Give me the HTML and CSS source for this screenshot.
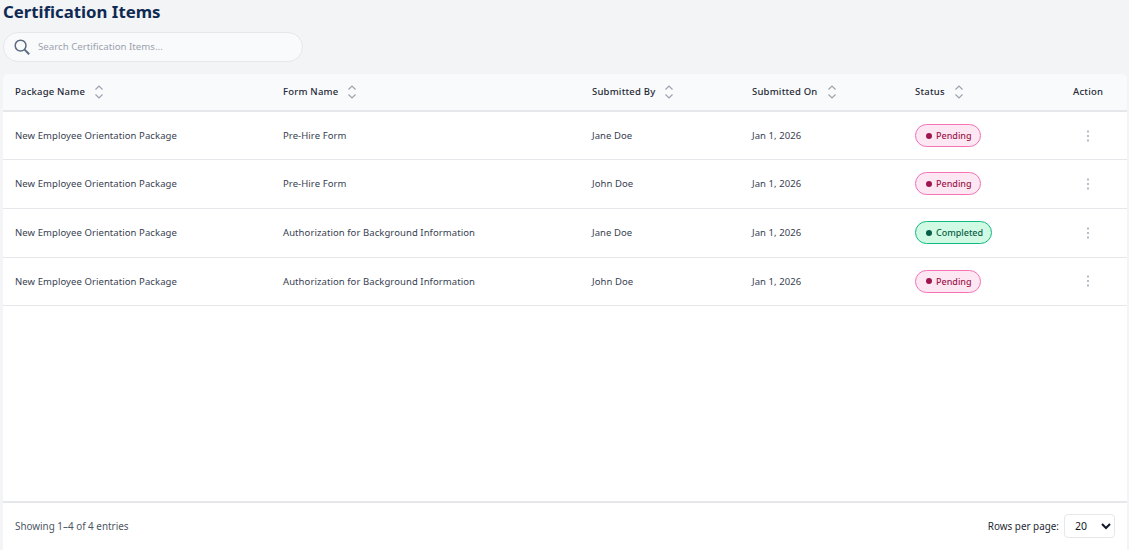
FILE: index.html
```html
<!DOCTYPE html>
<html lang="en">
<head>
<meta charset="utf-8">
<title>Certification Items</title>
<link rel="stylesheet" href="styles.css">
</head>
<body>
<main class="page">
  <h1 class="title">Certification Items</h1>
  <label class="search">
    <svg class="search-icon" viewBox="0 0 16 16" width="16" height="16" fill="none" stroke="#5a6b82" stroke-width="1.5"><circle cx="6.6" cy="6.6" r="5.4"/><path d="M10.6 10.6 15.2 15.2" stroke-width="2"/></svg>
    <input class="search-input" type="text" placeholder="Search Certification Items...">
  </label>
  <section class="panel">
    <div class="table-wrap">
      <table class="table">
        <colgroup>
          <col class="c1"><col class="c2"><col class="c3"><col class="c4"><col class="c5"><col class="c6">
        </colgroup>
        <thead>
          <tr>
            <th><span class="th-in">Package Name<svg class="sort" viewBox="0 0 10 16" width="10" height="16"><path d="M1.5 5.5 5 2l3.5 3.5M1.5 10.5 5 14l3.5-3.5"/></svg></span></th>
            <th><span class="th-in">Form Name<svg class="sort" viewBox="0 0 10 16" width="10" height="16"><path d="M1.5 5.5 5 2l3.5 3.5M1.5 10.5 5 14l3.5-3.5"/></svg></span></th>
            <th><span class="th-in">Submitted By<svg class="sort" viewBox="0 0 10 16" width="10" height="16"><path d="M1.5 5.5 5 2l3.5 3.5M1.5 10.5 5 14l3.5-3.5"/></svg></span></th>
            <th><span class="th-in">Submitted On<svg class="sort" viewBox="0 0 10 16" width="10" height="16"><path d="M1.5 5.5 5 2l3.5 3.5M1.5 10.5 5 14l3.5-3.5"/></svg></span></th>
            <th><span class="th-in">Status<svg class="sort" viewBox="0 0 10 16" width="10" height="16"><path d="M1.5 5.5 5 2l3.5 3.5M1.5 10.5 5 14l3.5-3.5"/></svg></span></th>
            <th>Action</th>
          </tr>
        </thead>
        <tbody>
          <tr>
            <td>New Employee Orientation Package</td><td>Pre-Hire Form</td><td>Jane Doe</td><td>Jan 1, 2026</td>
            <td><span class="badge pending"><i class="dot"></i>Pending</span></td>
            <td class="action"><svg class="kebab" viewBox="0 0 4 12" width="4" height="12"><circle cx="2" cy="1.5" r="0.9"/><circle cx="2" cy="6" r="0.9"/><circle cx="2" cy="10.5" r="0.9"/></svg></td>
          </tr>
          <tr class="row-tight">
            <td>New Employee Orientation Package</td><td>Pre-Hire Form</td><td>John Doe</td><td>Jan 1, 2026</td>
            <td><span class="badge pending"><i class="dot"></i>Pending</span></td>
            <td class="action"><svg class="kebab" viewBox="0 0 4 12" width="4" height="12"><circle cx="2" cy="1.5" r="0.9"/><circle cx="2" cy="6" r="0.9"/><circle cx="2" cy="10.5" r="0.9"/></svg></td>
          </tr>
          <tr>
            <td>New Employee Orientation Package</td><td>Authorization for Background Information</td><td>Jane Doe</td><td>Jan 1, 2026</td>
            <td><span class="badge completed"><i class="dot"></i>Completed</span></td>
            <td class="action"><svg class="kebab" viewBox="0 0 4 12" width="4" height="12"><circle cx="2" cy="1.5" r="0.9"/><circle cx="2" cy="6" r="0.9"/><circle cx="2" cy="10.5" r="0.9"/></svg></td>
          </tr>
          <tr>
            <td>New Employee Orientation Package</td><td>Authorization for Background Information</td><td>John Doe</td><td>Jan 1, 2026</td>
            <td><span class="badge pending"><i class="dot"></i>Pending</span></td>
            <td class="action"><svg class="kebab" viewBox="0 0 4 12" width="4" height="12"><circle cx="2" cy="1.5" r="0.9"/><circle cx="2" cy="6" r="0.9"/><circle cx="2" cy="10.5" r="0.9"/></svg></td>
          </tr>
        </tbody>
      </table>
    </div>
    <footer class="footer">
      <span class="entries">Showing 1–4 of 4 entries</span>
      <div class="rows">
        <span class="rows-label">Rows per page:</span>
        <select class="rows-select"><option>20</option></select>
      </div>
    </footer>
  </section>
</main>
</body>
</html>
```
FILE: styles.css
```css
* { box-sizing: border-box; }
html, body { margin: 0; height: 100%; overflow: hidden; }
body { background: #f3f4f6; font-family: "Noto Sans", "Open Sans", sans-serif; color: #1f2937; }
.page { height: 550px; padding: 0 2px 0 3px; display: flex; flex-direction: column; }
.title { margin: 0; font-size: 16.8px; line-height: 23px; font-weight: 700; color: #0f2a52; }
.search { margin-top: 9px; width: 300px; height: 30px; display: flex; align-items: center; gap: 7px; padding-left: 10px; background: #f9fafb; border: 1px solid #e5e7eb; border-radius: 15px; }
.search-icon { flex: none; }
.search-input { flex: 1; min-width: 0; height: 20px; padding: 0 0 2px 1px; border: 0; outline: 0; background: transparent; font: 400 9.7px "Noto Sans", sans-serif; color: #374151; }
.search-input::placeholder { color: #9ca3af; opacity: 1; }
.panel { margin-top: 12px; flex: 1; min-height: 0; display: flex; flex-direction: column; background: #fff; border-radius: 6px 6px 0 0; }
.table-wrap { flex: 1; min-height: 0; }
.table { width: 100%; border-collapse: collapse; table-layout: fixed; font-size: 9.5px; }
.c1 { width: 268px; } .c2 { width: 309px; } .c3 { width: 160px; } .c4 { width: 163px; } .c5 { width: 158px; } .c6 { width: 66px; }
.table th { height: 37px; padding: 0 0 1px 12px; text-align: left; font-weight: 500; letter-spacing: 0.2px; background: #f9fafb; border-bottom: 2px solid #e5e7eb; color: #1f2937; }
.table th:first-child { border-top-left-radius: 6px; }
.table th:last-child { border-top-right-radius: 6px; }
.th-in { display: flex; align-items: center; gap: 9px; }
.sort { fill: none; stroke: #9ca3af; stroke-width: 1.2; }
.table td { height: 48.7px; padding: 0 0 0 12px; letter-spacing: 0.08px; border-bottom: 1px solid #e5e7eb; color: #374151; }
.table .row-tight td { padding-bottom: 1px; }
.table td.action { padding-left: 25px; }
.kebab { display: block; fill: #8fa0b5; }
.badge { display: inline-flex; align-items: center; gap: 4px; height: 23px; padding: 0 8px 0 10px; border: 1px solid; border-radius: 12px; font-size: 9px; font-weight: 500; letter-spacing: 0; }
.dot { width: 6px; height: 6px; border-radius: 50%; background: currentColor; }
.pending { background: #fce7f3; border-color: #f472b6; color: #9d174d; }
.completed { background: #d1fae5; border-color: #10b981; color: #065f46; }
.footer { height: 49px; display: flex; align-items: center; justify-content: space-between; padding: 0 12px 2px; border-top: 2px solid #e5e7eb; }
.entries { font-size: 9.9px; color: #4b5563; }
.rows { display: flex; align-items: center; gap: 5px; }
.rows-label { font-size: 9.9px; color: #1f2937; }
.rows-select { width: 51px; height: 24px; padding: 0 0 0 6px; font: 400 10.5px "Noto Sans", sans-serif; color: #111827; background: #fff; border: 1px solid #e5e7eb; border-radius: 4px; }
```
